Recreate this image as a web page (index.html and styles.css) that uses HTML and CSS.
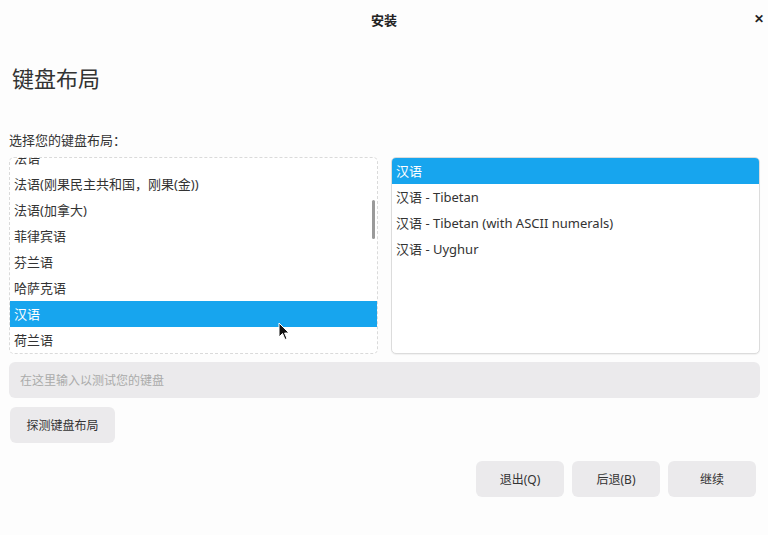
FILE: index.html
```html
<!DOCTYPE html>
<html lang="zh-CN">
<head>
    <meta charset="UTF-8">
    <meta name="viewport" content="width=device-width, initial-scale=1.0">
    <title>安装</title>
    <link rel="stylesheet" href="styles.css">
</head>
<body>
    <header class="titlebar">
        <span class="title">安装</span>
        <span class="close">&#x2715;</span>
    </header>
    <main class="page">
        <h1 class="heading">键盘布局</h1>
        <p class="label">选择您的键盘布局：</p>
        <div class="lists">
            <div class="list list-left">
                <ul class="rows scrolled">
                    <li>法语</li>
                    <li>法语(刚果民主共和国，刚果(金))</li>
                    <li>法语(加拿大)</li>
                    <li>菲律宾语</li>
                    <li>芬兰语</li>
                    <li>哈萨克语</li>
                    <li class="selected">汉语</li>
                    <li>荷兰语</li>
                </ul>
                <div class="scrollbar"></div>
                <svg class="cursor" width="12" height="19" viewBox="0 0 12 19">
                    <path d="M1 1 L1 15 L4.5 11.5 L7 17.5 L9 16.6 L6.6 11 L11 11 Z" fill="#111" stroke="#fff" stroke-width="1"/>
                </svg>
            </div>
            <div class="list list-right">
                <ul class="rows">
                    <li class="selected">汉语</li>
                    <li>汉语 - Tibetan</li>
                    <li>汉语 - Tibetan (with ASCII numerals)</li>
                    <li>汉语 - Uyghur</li>
                </ul>
            </div>
        </div>
        <input class="test-input" type="text" placeholder="在这里输入以测试您的键盘">
        <div class="detect-row">
            <button class="btn">探测键盘布局</button>
        </div>
        <div class="nav">
            <button class="btn nav-btn">退出(Q)</button>
            <button class="btn nav-btn">后退(B)</button>
            <button class="btn nav-btn">继续</button>
        </div>
    </main>
</body>
</html>
```

FILE: styles.css
```css
* {box-sizing: border-box;}
html, body {margin: 0; padding: 0;}
body {width: 768px; height: 535px; overflow: hidden; background-color: #fdfdfd; color: #333;
    font-family: "Noto Sans", "Noto Sans CJK SC", sans-serif; font-size: 13px;
}

.titlebar {height: 38px; display: flex; align-items: center; justify-content: center; position: relative;}
.title {font-size: 13px; font-weight: bold; color: #222;}
.close {position: absolute; right: 4px; top: 10px; font-size: 12px; font-weight: bold; color: #222;}

.page {padding: 0 8px 0 9px;}
.heading {margin: 25px 0 0 3px; font-size: 22px; font-weight: normal; line-height: 30px; color: #333;}
.label {margin: 38px 0 0 0; line-height: 18px; font-size: 13px;}

.lists {display: flex; gap: 13px; margin-top: 8px;}
.list {flex: 1; height: 197px; border-radius: 5px; overflow: hidden; position: relative; background-color: #fff;}
.list-left {border: 1px dashed #dadada;}
.list-right {border: 1px solid #dcdcdc; box-shadow: 0 1px 1px rgba(0,0,0,0.05);}

.rows {list-style: none; margin: 0; padding: 0;}
.rows li {height: 26px; line-height: 26px; padding-left: 4px; white-space: nowrap;}
.rows li.selected {background-color: #17a5ee; color: #fff;}
.scrolled {margin-top: -13px;}

.scrollbar {position: absolute; right: 2px; top: 42px; width: 3px; height: 39px; border-radius: 2px; background-color: #9a9a9a;}
.cursor {position: absolute; left: 268px; top: 164px;}

.test-input {display: block; width: 100%; height: 36px; margin-top: 8px; border: none; border-radius: 6px;
    background-color: #ebeaec; padding: 0 11px; font-family: inherit; font-size: 12px; color: #333; outline: none;}
.test-input::placeholder {color: #aaa;}

.detect-row {margin-top: 9px;}
.btn {height: 36px; border: none; border-radius: 6px; background-color: #ebeaec; color: #333;
    font-family: inherit; font-size: 12px; padding: 0; white-space: nowrap;}
.detect-row .btn {margin-left: 1px; width: 105px;}

.nav {display: flex; justify-content: flex-end; gap: 8px; margin-top: 18px; padding-right: 4px;}
.nav-btn {width: 88px;}
```
